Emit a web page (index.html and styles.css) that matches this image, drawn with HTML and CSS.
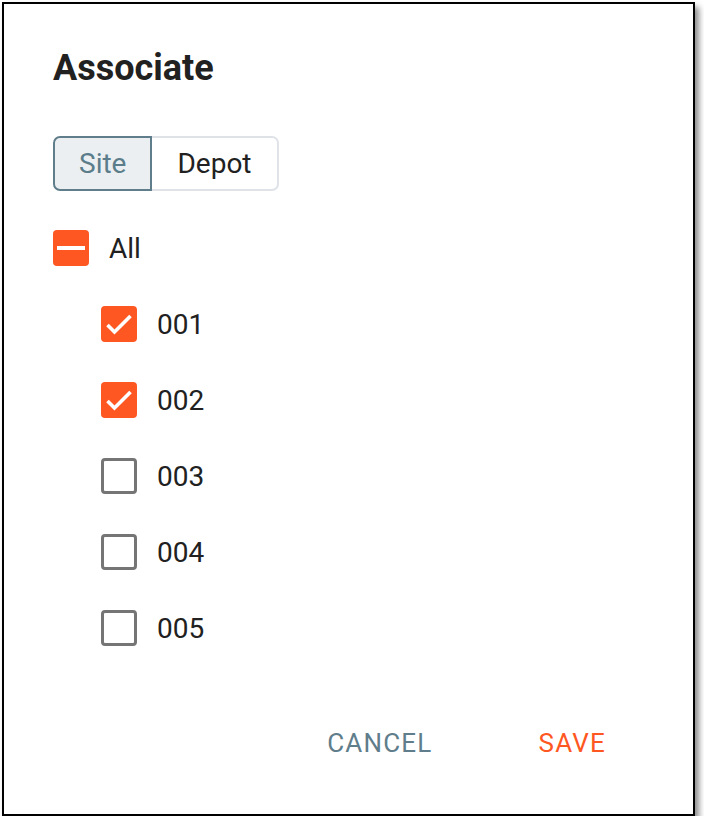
FILE: index.html
```html
<!DOCTYPE html>
<html lang="en">
<head>
    <meta charset="UTF-8">
    <meta name="viewport" content="width=device-width, initial-scale=1.0">
    <title>Associate</title>
    <link rel="stylesheet" href="styles.css">
</head>
<body>

<div class="dialog">
    <h1 class="dialog-title">Associate</h1>

    <div class="toggle-group">
        <button class="toggle active">Site</button>
        <button class="toggle">Depot</button>
    </div>

    <ul class="check-list">
        <li class="check-row">
            <span class="box filled">
                <svg viewBox="0 0 36 36"><rect x="4" y="16" width="28" height="4" fill="#fff"/></svg>
            </span>
            <span class="label">All</span>
        </li>
        <li class="check-row child">
            <span class="box filled">
                <svg viewBox="0 0 36 36"><polyline points="6.5,19 13.5,26 29.5,10" fill="none" stroke="#fff" stroke-width="3.6"/></svg>
            </span>
            <span class="label">001</span>
        </li>
        <li class="check-row child">
            <span class="box filled">
                <svg viewBox="0 0 36 36"><polyline points="6.5,19 13.5,26 29.5,10" fill="none" stroke="#fff" stroke-width="3.6"/></svg>
            </span>
            <span class="label">002</span>
        </li>
        <li class="check-row child">
            <span class="box"></span>
            <span class="label">003</span>
        </li>
        <li class="check-row child">
            <span class="box"></span>
            <span class="label">004</span>
        </li>
        <li class="check-row child">
            <span class="box"></span>
            <span class="label">005</span>
        </li>
    </ul>

    <div class="actions">
        <button class="action cancel">Cancel</button>
        <button class="action save">Save</button>
    </div>
</div>

</body>
</html>
```

FILE: styles.css
```css
body {
    font-family: Roboto, "Liberation Sans", sans-serif;
    background-color: #fff;
    margin: 0;
    padding: 0;
}
.dialog {
    box-sizing: border-box;
    width: 693px;
    height: 814px;
    margin: 2px 0 0 2px;
    border: 2px solid #000;
    background: #fff;
    box-shadow: 4px 5px 6px rgba(0, 0, 0, 0.45);
    padding: 44px 0 0 49px;
    display: flex;
    flex-direction: column;
}
.dialog-title {
    margin: 0;
    font-size: 36px;
    line-height: 40px;
    font-weight: 700;
    color: #212121;
}
.toggle-group {
    display: flex;
    margin-top: 48px;
    height: 55px;
}
.toggle {
    font-family: inherit;
    font-size: 28px;
    padding: 0 25px;
    background: #fff;
    color: #212121;
    border: 2px solid #dfe3e8;
    border-left: none;
    border-radius: 0 7px 7px 0;
    cursor: pointer;
}
.toggle.active {
    background: #eceff1;
    color: #5b7d8b;
    border: 2px solid #5f7d8b;
    border-radius: 7px 0 0 7px;
    padding: 0 24px;
}
.check-list {
    list-style: none;
    margin: 19px 0 0 0;
    padding: 0;
}
.check-row {
    display: flex;
    align-items: center;
    height: 76px;
    gap: 20px;
}
.check-row.child {
    padding-left: 48px;
}
.box {
    box-sizing: border-box;
    width: 36px;
    height: 36px;
    border: 3px solid #757575;
    border-radius: 4px;
    flex-shrink: 0;
}
.box.filled {
    background: #ff5722;
    border: none;
}
.box svg {
    display: block;
    width: 36px;
    height: 36px;
}
.label {
    font-size: 28px;
    color: #212121;
}
.actions {
    display: flex;
    justify-content: flex-end;
    gap: 50px;
    margin-top: 45px;
    padding-right: 59px;
}
.action {
    font-family: inherit;
    font-size: 26px;
    letter-spacing: 1.2px;
    text-transform: uppercase;
    background: none;
    border: none;
    height: 64px;
    padding: 0 28px;
    cursor: pointer;
}
.cancel {
    color: #607d8b;
}
.save {
    color: #ff5722;
}
```
